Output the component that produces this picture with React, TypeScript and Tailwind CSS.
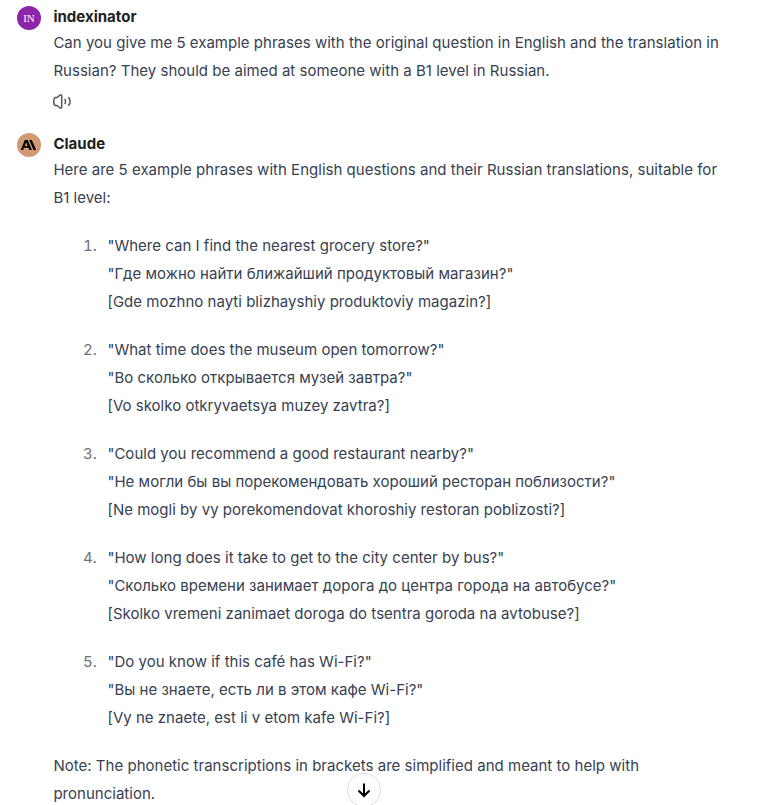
import React from "react";

const phrases = [
  ["\"Where can I find the nearest grocery store?\"", "\"Где можно найти ближайший продуктовый магазин?\"", "[Gde mozhno nayti blizhayshiy produktoviy magazin?]"],
  ["\"What time does the museum open tomorrow?\"", "\"Во сколько открывается музей завтра?\"", "[Vo skolko otkryvaetsya muzey zavtra?]"],
  ["\"Could you recommend a good restaurant nearby?\"", "\"Не могли бы вы порекомендовать хороший ресторан поблизости?\"", "[Ne mogli by vy porekomendovat khoroshiy restoran poblizosti?]"],
  ["\"How long does it take to get to the city center by bus?\"", "\"Сколько времени занимает дорога до центра города на автобусе?\"", "[Skolko vremeni zanimaet doroga do tsentra goroda na avtobuse?]"],
  ["\"Do you know if this café has Wi-Fi?\"", "\"Вы не знаете, есть ли в этом кафе Wi-Fi?\"", "[Vy ne znaete, est li v etom kafe Wi-Fi?]"],
];

function SpeakerIcon() {
  return (
    <svg width="20" height="20" viewBox="0 0 20 20" fill="none" stroke="#555" strokeWidth="1.5" strokeLinecap="round" strokeLinejoin="round">
      <path d="M2.500 5.500h1.600L6.800 3.200c.8-.7 1.900-.2 1.900.8v11c0 1-1.100 1.500-1.900.8L4.100 13.500H2.500C1.400 13.500.8 11.700.8 9.500S1.400 5.500 2.500 5.500z" />
      <path d="M12 7.500c.8 1.200.8 2.800 0 4M15.800 5.700c1.700 2.400 1.700 5.200 0 7.600" />
    </svg>
  );
}

function ClaudeLogo() {
  return (
    <svg width="24" height="24" viewBox="0 0 24 24">
      <path fill="#000" d="M7.800 7h2.900l4.200 10h-2.500l-.9-2.200H6.900L6.100 17H3.800zM7.700 12.900h3L9.200 9.200zM12.200 7h2.600l4.400 10h-2.700z" />
    </svg>
  );
}

export default function App() {
  return (
    <main className="relative h-[805px] w-[768px] overflow-hidden bg-white pl-[17px] font-['Inter',sans-serif] text-[15px] leading-7 tracking-[0.018px] text-[#374151]">
      <section className="flex gap-[12.4px] pt-[5px]">
        <div className="mt-px flex size-6 shrink-0 items-center justify-center rounded-full bg-[#8e24aa] font-['Liberation_Serif',serif] text-[11px] text-white">IN</div>
        <div className="w-[690px]">
          <h2 className="h-6 font-bold leading-6 text-[#212121]">indexinator</h2>
          <p>Can you give me 5 example phrases with the original question in English and the translation in<br />Russian? They should be aimed at someone with a B1 level in Russian.</p>
          <div className="mt-[7px]"><SpeakerIcon /></div>
        </div>
      </section>
      <section className="mt-[20px] flex gap-[12.4px]">
        <div className="mt-px size-6 shrink-0 rounded-full bg-[#d09a74]"><ClaudeLogo /></div>
        <div className="w-[690px]">
          <h2 className="h-6 font-bold leading-6 text-[#212121]">Claude</h2>
          <p>Here are 5 example phrases with English questions and their Russian translations, suitable for<br />B1 level:</p>
          <ol className="my-5 flex flex-col gap-5">
            {phrases.map((lines, i) => (
              <li key={i} className="flex">
                <span className="mr-[10.5px] w-[43.5px] text-right tabular-nums text-[#6b7280]">{i + 1}.</span>
                <div>{lines.map((line) => <p key={line}>{line}</p>)}</div>
              </li>
            ))}
          </ol>
          <p>Note: The phonetic transcriptions in brackets are simplified and meant to help with<br />pronunciation.</p>
        </div>
      </section>
      <button aria-label="Scroll down" className="absolute left-[347px] top-[773px] flex size-[34px] items-center justify-center rounded-full border border-[#dcdcdc] bg-white">
        <svg width="16" height="16" viewBox="0 0 16 16" fill="none" stroke="#000" strokeWidth="2"><path d="M8 1.500v12M2.500 8.500L8 14l5.500-5.500" /></svg>
      </button>
    </main>
  );
}
